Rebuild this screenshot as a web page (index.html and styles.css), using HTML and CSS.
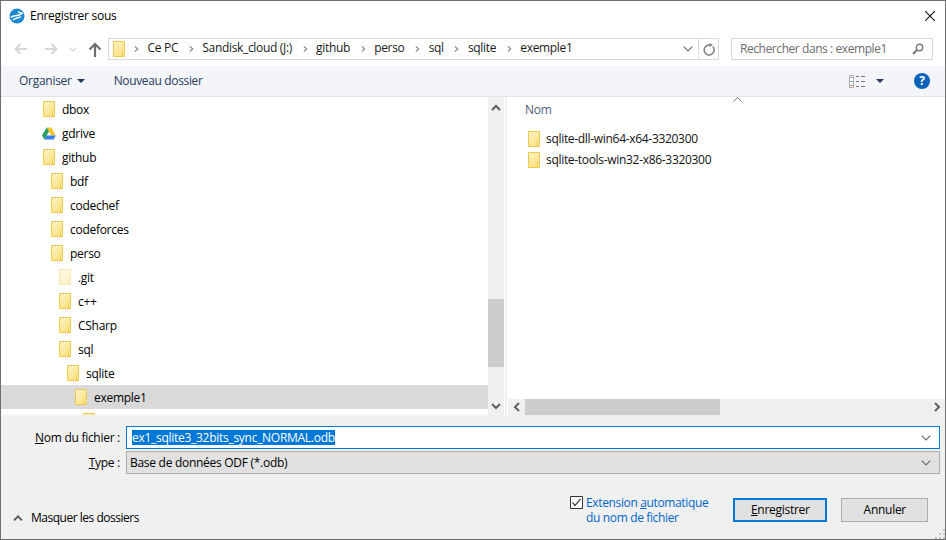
FILE: index.html
```html
<!DOCTYPE html>
<html lang="fr">
<head>
<meta charset="utf-8">
<title>Enregistrer sous</title>
<link rel="stylesheet" href="styles.css">
</head>
<body>
<svg class="defs" width="0" height="0" aria-hidden="true">
  <defs>
    <linearGradient id="fg" x1="0" y1="0" x2="0.6" y2="1"><stop offset="0" stop-color="#fff3c4"/><stop offset="1" stop-color="#fde184"/></linearGradient>
    <symbol id="folder" viewBox="0 0 12 16">
      <path d="M.5.5h11v15H.5z" fill="url(#fg)" stroke="#ecc94f"/>
      <path d="M11.5 10.5h-2v5" fill="#fff6d2" stroke="#ecc94f"/>
    </symbol>
    <symbol id="chev" viewBox="0 0 6 8"><path d="M1 .8 4.4 4 1 7.2" fill="none" stroke="#8a8a8a" stroke-width="1.5"/></symbol>
    <symbol id="down" viewBox="0 0 10 6"><path d="M.7.7 5 5 9.300.7" fill="none" stroke="#6b6b6b" stroke-width="1.200"/></symbol>
  </defs>
</svg>
<div class="window">
  <header class="titlebar">
    <svg class="appicon" width="16" height="16" viewBox="0 0 16 16"><circle cx="8" cy="8" r="7.500" fill="#1b87d2"/><path d="M2 9.500C5 6.500 8 9.500 14 5M4 12c2.500-2.500 5-1.500 8-3.500M9 3.500c1 1 2 1.500 3.500 1" fill="none" stroke="#fff" stroke-width="1.500"/></svg>
    <span class="title">Enregistrer sous</span>
    <svg class="close" width="10" height="10" viewBox="0 0 10 10"><path d="M0 0l10 10M10 0 0 10" stroke="#111" stroke-width="1.100"/></svg>
  </header>
  <nav class="addressrow">
    <svg class="navicon" width="16" height="14" viewBox="0 0 16 14"><path d="M14 7H2.500M7.500 2 2.500 7l5 5" fill="none" stroke="#d6d6d6" stroke-width="2"/></svg>
    <svg class="navicon fwd" width="16" height="14" viewBox="0 0 16 14"><path d="M2 7h11.500M8.500 2l5 5-5 5" fill="none" stroke="#d6d6d6" stroke-width="2"/></svg>
    <svg class="navicon recent" width="8" height="5" viewBox="0 0 8 5"><path d="M.5.5 4 4 7.500.5" fill="none" stroke="#d6d6d6" stroke-width="1.200"/></svg>
    <svg class="navicon up" width="14" height="15" viewBox="0 0 14 15"><path d="M7 15V2M1.500 7.500 7 2l5.500 5.500" fill="none" stroke="#6e6e6e" stroke-width="2.200"/></svg>
    <div class="address">
      <svg class="ico addr-folder"><use href="#folder"/></svg>
      <div class="crumbs">
        <svg class="chev"><use href="#chev"/></svg><span>Ce PC</span>
        <svg class="chev"><use href="#chev"/></svg><span>Sandisk_cloud (J:)</span>
        <svg class="chev"><use href="#chev"/></svg><span>github</span>
        <svg class="chev"><use href="#chev"/></svg><span>perso</span>
        <svg class="chev"><use href="#chev"/></svg><span>sql</span>
        <svg class="chev"><use href="#chev"/></svg><span>sqlite</span>
        <svg class="chev"><use href="#chev"/></svg><span>exemple1</span>
      </div>
      <svg class="addr-down" width="10" height="6"><use href="#down"/></svg>
      <div class="refresh">
        <svg width="12" height="13" viewBox="0 0 12 13"><path d="M9.800 3.500A5 5 0 1 1 5.500 2H8" fill="none" stroke="#808080" stroke-width="1.500"/><path d="M6.500 0v4L10 2z" fill="#808080"/></svg>
      </div>
    </div>
    <div class="search">
      <span>Rechercher dans : exemple1</span>
      <svg width="12" height="12" viewBox="0 0 12 12"><circle cx="7.500" cy="4.500" r="3.200" fill="none" stroke="#777" stroke-width="1.400"/><path d="M5 7 1 11" stroke="#777" stroke-width="2"/></svg>
    </div>
  </nav>
  <div class="toolbar">
    <span class="tool">Organiser</span>
    <span class="caret"></span>
    <span class="tool newfolder">Nouveau dossier</span>
    <svg class="viewicon" width="17" height="13" viewBox="0 0 17 13"><path d="M.5.500h4v12h-4z" fill="#fff" stroke="#a9a9a9"/><path d="M1.500 2h2v1h-2zM1.500 6h2v1h-2z" fill="#5a7fa8"/><path d="M1.500 10h2v1h-2z" fill="#c0504d"/><path d="M7 1.500h3M12 1.500h4M7 6.500h3M12 6.500h4M7 11.500h3M12 11.500h4" stroke="#777"/></svg>
    <span class="caret viewcaret"></span>
    <span class="help">?</span>
  </div>
  <main class="panes">
    <section class="tree">
      <div class="row l0"><svg class="ico"><use href="#folder"/></svg><span>dbox</span></div>
      <div class="row l0"><svg class="ico gd" viewBox="0 0 14 13"><path d="M4.700.500h4.600l4.500 8H9.200z" fill="#f7c325"/><path d="M4.700.500 0 8.500l2.300 4L7 4.500z" fill="#2a9f5c"/><path d="M2.300 12.500h9.400l2.100-4H4.600z" fill="#3b7de8"/></svg><span>gdrive</span></div>
      <div class="row l0"><svg class="ico"><use href="#folder"/></svg><span>github</span></div>
      <div class="row l1"><svg class="ico"><use href="#folder"/></svg><span>bdf</span></div>
      <div class="row l1"><svg class="ico"><use href="#folder"/></svg><span>codechef</span></div>
      <div class="row l1"><svg class="ico"><use href="#folder"/></svg><span>codeforces</span></div>
      <div class="row l1"><svg class="ico"><use href="#folder"/></svg><span>perso</span></div>
      <div class="row l2"><svg class="ico pale"><use href="#folder"/></svg><span>.git</span></div>
      <div class="row l2"><svg class="ico"><use href="#folder"/></svg><span>c++</span></div>
      <div class="row l2"><svg class="ico"><use href="#folder"/></svg><span>CSharp</span></div>
      <div class="row l2"><svg class="ico"><use href="#folder"/></svg><span>sql</span></div>
      <div class="row l3"><svg class="ico"><use href="#folder"/></svg><span>sqlite</span></div>
      <div class="row l4 selected"><svg class="ico"><use href="#folder"/></svg><span>exemple1</span></div>
      <div class="row l5"><svg class="ico"><use href="#folder"/></svg></div>
    </section>
    <div class="vscroll">
      <svg class="arrow" width="10" height="7" viewBox="0 0 10 7"><path d="M1 6 5 2l4 4" fill="none" stroke="#606060" stroke-width="2"/></svg>
      <div class="vtrack"><div class="vthumb"></div></div>
      <svg class="arrow" width="10" height="7" viewBox="0 0 10 7"><path d="M1 1l4 4 4-4" fill="none" stroke="#606060" stroke-width="2"/></svg>
    </div>
    <section class="list">
      <svg class="sort" width="9" height="5" viewBox="0 0 9 5"><path d="M.5 4.500l4-4 4 4" fill="none" stroke="#777"/></svg>
      <div class="colhead">Nom</div>
      <div class="items">
        <div class="item"><svg class="ico"><use href="#folder"/></svg><span>sqlite-dll-win64-x64-3320300</span></div>
        <div class="item"><svg class="ico"><use href="#folder"/></svg><span>sqlite-tools-win32-x86-3320300</span></div>
      </div>
      <div class="hscroll">
        <svg width="7" height="10" viewBox="0 0 7 10"><path d="M6 1 2 5l4 4" fill="none" stroke="#606060" stroke-width="2"/></svg>
        <div class="htrack"><div class="hthumb"></div></div>
        <svg width="7" height="10" viewBox="0 0 7 10"><path d="M1 1l4 4-4 4" fill="none" stroke="#606060" stroke-width="2"/></svg>
      </div>
    </section>
  </main>
  <footer class="footer">
    <div class="field">
      <label class="flabel"><u>N</u>om du fichier :</label>
      <div class="input"><span class="sel">ex1_sqlite3_32bits_sync_NORMAL.odb</span><svg width="10" height="6"><use href="#down"/></svg></div>
    </div>
    <div class="field second">
      <label class="flabel"><u>T</u>ype :</label>
      <div class="input select"><span>Base de données ODF (*.odb)</span><svg width="10" height="6"><use href="#down"/></svg></div>
    </div>
    <div class="actions">
      <div class="hide">
        <svg width="10" height="6" viewBox="0 0 10 6"><path d="M1 5.300 5 1.300l4 4" fill="none" stroke="#555" stroke-width="1.800"/></svg>
        <span>Masquer les dossiers</span>
      </div>
      <div class="ext">
        <svg width="13" height="13" viewBox="0 0 13 13"><path d="M.5.500h12v12H.5z" fill="#fff" stroke="#333"/><path d="M2.500 6.500 5 9.500l5.500-6.500" fill="none" stroke="#444" stroke-width="1.200"/></svg>
        <span>Extension <u>a</u>utomatique<br>du nom de fichier</span>
      </div>
      <button class="btn primary"><u>E</u>nregistrer</button>
      <button class="btn">Annuler</button>
    </div>
    <svg class="grip" width="10" height="10" viewBox="0 0 10 10"><path d="M8 0h2v2H8zM4 4h2v2H4zM8 4h2v2H8zM0 8h2v2H0zM4 8h2v2H4zM8 8h2v2H8z" fill="#c4c4c4"/></svg>
  </footer>
</div>
</body>
</html>
```
FILE: styles.css
```css
* { box-sizing: border-box; }
html, body { margin: 0; height: 100%; overflow: hidden; background: #fff; }
body { font: 12px/16px "Open Sans", "Noto Sans", sans-serif; letter-spacing: -0.28px; color: #000; }
.defs { position: absolute; }
svg { display: block; flex: none; }
.window { width: 946px; height: 540px; border: 1px solid #6f6f6f; display: flex; flex-direction: column; background: #fff; position: relative; }

.titlebar { height: 30px; display: flex; align-items: center; padding-left: 8px; padding-right: 10px; flex: none; }
.title { margin-left: 5px; }
.close { margin-left: auto; }

.addressrow { height: 35px; display: flex; align-items: center; padding-top: 1px; flex: none; }
.navicon { margin-left: 12px; }
.navicon.fwd { margin-left: 14px; }
.navicon.recent { margin-left: 10px; }
.navicon.up { margin-left: 11px; }
.address { width: 611px; height: 22px; margin-left: 6px; border: 1px solid #d9d9d9; display: flex; align-items: center; padding-left: 4px; color: #1a1a1a; }
.ico { width: 12px; height: 16px; flex: none; }
.crumbs { display: flex; align-items: center; gap: 7.6px; margin-left: 6px; letter-spacing: -0.33px; }
.crumbs span { padding-bottom: 2px; }
.chev { width: 5px; height: 8px; margin-left: 3px; margin-right: 1px; }
.addr-down { margin-left: auto; margin-right: 5px; }
.refresh { width: 20px; height: 20px; border-left: 1px solid #d9d9d9; display: flex; align-items: center; justify-content: center; }
.search { width: 202px; height: 22px; margin-left: 12px; border: 1px solid #d9d9d9; display: flex; align-items: center; justify-content: space-between; padding: 0 8px; color: #6d6d6d; letter-spacing: -0.43px; }

.toolbar { height: 31px; background: #f3f5f8; border-bottom: 1px solid #e3e4e6; display: flex; align-items: center; padding-left: 18px; padding-right: 15px; color: #1f3a5c; flex: none; }
.caret { width: 0; height: 0; border-left: 4px solid transparent; border-right: 4px solid transparent; border-top: 4px solid #1f3a5c; margin-left: 5px; }
.newfolder { margin-left: 29px; letter-spacing: -0.35px; }
.viewicon { margin-left: auto; }
.viewcaret { margin-left: 10px; }
.help { width: 16px; height: 16px; border-radius: 50%; margin-left: 30px; background: #0a63b8; color: #fff; font-weight: 700; font-size: 12px; line-height: 16px; text-align: center; }

.panes { height: 318px; display: flex; flex: none; overflow: hidden; }
.tree { width: 487px; overflow: hidden; flex: none; }
.row { height: 24px; display: flex; align-items: center; gap: 7px; }
.row span { padding-top: 2px; }
.row.selected { background: #d9d9d9; }
.l0 { padding-left: 42px; }
.l1 { padding-left: 50px; }
.l2 { padding-left: 58px; }
.l3 { padding-left: 66px; }
.l4 { padding-left: 74px; }
.l5 { padding-left: 82px; }
.pale { opacity: .42; }
.gd { height: 13px; width: 14px; margin-left: -1px; margin-right: -1px; }

.vscroll { width: 16px; background: #f0f0f0; display: flex; flex-direction: column; align-items: center; flex: none; padding: 7px 0 5px; }
.vtrack { flex: 1; width: 100%; padding-top: 188px; }
.vthumb { height: 68px; background: #cdcdcd; }

.list { flex: 1; margin-left: 1px; border-left: 2px solid #f0f0f0; display: flex; flex-direction: column; position: relative; padding-left: 1px; }
.sort { position: absolute; left: 226px; top: 0; }
.colhead { height: 27px; padding-left: 17px; padding-top: 5px; color: #4c607a; flex: none; }
.items { flex: 1; padding-left: 20px; padding-top: 4px; }
.item { height: 21px; display: flex; align-items: center; gap: 6px; color: #111; letter-spacing: -0.31px; }
.hscroll { height: 16px; background: #f0f0f0; display: flex; align-items: center; padding: 0 4px 0 5px; flex: none; }
.htrack { flex: 1; height: 100%; margin: 0 5px; }
.hthumb { width: 195px; height: 100%; background: #cdcdcd; }

.footer { flex: 1; background: #f0f0f0; padding: 11px 5px 0 0; position: relative; }
.field { display: flex; align-items: center; height: 23px; }
.field.second { margin-top: 2px; }
.flabel { width: 119px; text-align: right; margin-right: 6px; }
.input { flex: 1; height: 23px; border: 1px solid #0078d7; background: #fff; display: flex; align-items: center; padding-left: 5px; padding-right: 8px; justify-content: space-between; }
.sel { background: #0078d7; color: #fff; height: 15px; line-height: 15px; }
.select { background: #e1e1e1; border-color: #adadad; padding-left: 3px; }
.actions { display: flex; align-items: flex-start; margin-top: 21px; padding-left: 12px; }
.hide { display: flex; align-items: center; gap: 8px; margin-top: 15px; letter-spacing: -0.48px; }
.ext { display: flex; gap: 3px; color: #0066cc; margin-left: 431px; line-height: 15px; letter-spacing: -0.36px; }
.ext svg { margin-top: 1px; }
.btn { font: inherit; letter-spacing: inherit; color: #000; height: 24px; padding: 0; background: #e1e1e1; border: 1px solid #adadad; width: 87px; margin-left: 14px; margin-top: 3px; }
.btn.primary { width: 94px; border: 2px solid #0078d7; margin-left: 25px; }
.grip { position: absolute; right: 0; bottom: 0; }
```
